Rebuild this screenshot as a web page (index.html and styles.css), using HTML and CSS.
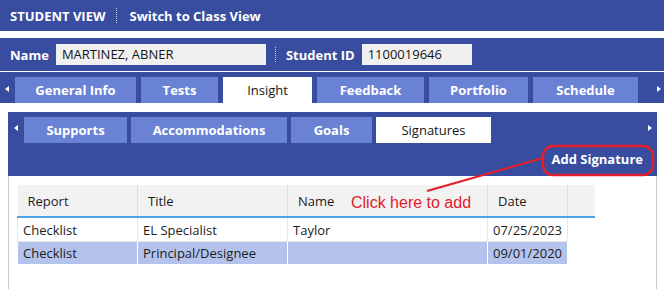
FILE: index.html
```html
<!DOCTYPE html>
<html lang="en">
<head>
    <meta charset="UTF-8">
    <title>Student Signatures</title>
    <link rel="stylesheet" href="styles.css">
</head>
<body>
    <div class="topbar">
        <span>STUDENT VIEW</span>
        <span class="sep"></span>
        <span>Switch to Class View</span>
    </div>

    <div class="infobar">
        <span class="label">Name</span>
        <span class="field field-name">MARTINEZ, ABNER</span>
        <span class="sep"></span>
        <span class="label">Student ID</span>
        <span class="field field-id">1100019646</span>
    </div>

    <div class="tabbar">
        <span class="arrow left"></span>
        <div class="tabs">
            <span class="tab">General Info</span>
            <span class="tab">Tests</span>
            <span class="tab active">Insight</span>
            <span class="tab">Feedback</span>
            <span class="tab">Portfolio</span>
            <span class="tab">Schedule</span>
        </div>
        <span class="arrow right"></span>
    </div>

    <div class="panel">
        <div class="panel-head">
            <div class="subtabbar">
                <span class="arrow left"></span>
                <div class="subtabs">
                    <span class="subtab">Supports</span>
                    <span class="subtab">Accommodations</span>
                    <span class="subtab">Goals</span>
                    <span class="subtab active">Signatures</span>
                </div>
                <span class="arrow right"></span>
            </div>
            <div class="actions">
                <span class="add-btn">Add Signature</span>
            </div>
        </div>

        <table class="grid">
            <colgroup>
                <col style="width:120px">
                <col style="width:150px">
                <col style="width:200px">
                <col style="width:80px">
                <col style="width:27px">
            </colgroup>
            <thead>
                <tr>
                    <th>Report</th>
                    <th>Title</th>
                    <th>Name</th>
                    <th>Date</th>
                    <th></th>
                </tr>
            </thead>
            <tbody>
                <tr>
                    <td>Checklist</td>
                    <td>EL Specialist</td>
                    <td>Taylor</td>
                    <td>07/25/2023</td>
                    <td class="spacer"></td>
                </tr>
                <tr class="selected">
                    <td>Checklist</td>
                    <td>Principal/Designee</td>
                    <td></td>
                    <td>09/01/2020</td>
                    <td class="spacer"></td>
                </tr>
            </tbody>
        </table>
    </div>

    <!-- red annotation drawn over the page -->
    <svg class="note-lines" width="664" height="289" viewBox="0 0 664 289">
        <line x1="427" y1="191" x2="543" y2="158" stroke="#e3202b" stroke-width="2.2"/>
        <rect x="543" y="146" width="110" height="29" rx="10" ry="10" fill="none" stroke="#e3202b" stroke-width="2.4"/>
    </svg>
    <div class="note-text">Click here to add</div>
</body>
</html>
```

FILE: styles.css
```css
body {
    margin: 0;
    font-family: "Open Sans", Arial, sans-serif;
    font-size: 13px;
    color: #1c1c1c;
    background-color: #fff;
    width: 664px;
    height: 289px;
    overflow: hidden;
    position: relative;
}

.topbar {
    height: 31px;
    background-color: #384ca0;
    color: #fff;
    font-weight: 700;
    display: flex;
    align-items: center;
    padding-left: 10px;
}

.sep {
    height: 15px;
    border-left: 1px dotted #c8d0ee;
    margin: 0 13px 0 10px;
}

.infobar {
    margin-top: 7px;
    height: 33px;
    background-color: #384ca0;
    border-bottom: 1px solid #fff;
    display: flex;
    align-items: center;
    padding-left: 10px;
    color: #fff;
    font-weight: 700;
}

.infobar .sep {
    margin: 0 10px 0 9px;
}

.field {
    height: 21px;
    line-height: 21px;
    background-color: #f0f0f0;
    color: #151515;
    font-weight: 500;
    padding-left: 6px;
    box-sizing: border-box;
    margin-left: 7px;
}

.field-name {
    width: 210px;
}

.field-id {
    width: 110px;
}

.tabbar {
    height: 31px;
    background-color: #384ca0;
    display: flex;
    align-items: flex-end;
}

.arrow {
    width: 0;
    height: 0;
    border-top: 3px solid transparent;
    border-bottom: 3px solid transparent;
    align-self: center;
}

.arrow.left {
    border-right: 4px solid #fff;
    margin: 2px 6px 0 5px;
}

.arrow.right {
    border-left: 4px solid #fff;
    margin: 2px 0 0 auto;
}

.tabbar .arrow.right {
    margin-right: 3px;
}

.tabs,
.subtabs {
    display: flex;
    gap: 5px;
}

.tab,
.subtab {
    height: 26px;
    line-height: 26px;
    background-color: #6a82d4;
    color: #fff;
    font-weight: 700;
    text-align: center;
}

.tab.active,
.subtab.active {
    background-color: #fff;
    color: #151515;
    font-weight: 500;
}

.tab:nth-child(1) { width: 121px; }
.tab:nth-child(2) { width: 77px; }
.tab:nth-child(3) { width: 89px; }
.tab:nth-child(4) { width: 107px; }
.tab:nth-child(5) { width: 99px; }
.tab:nth-child(6) { width: 105px; }

.panel {
    margin: 9px 7px 0 8px;
    border-left: 1px solid #c9c9c9;
    border-right: 1px solid #c9c9c9;
    height: 177px;
}

.panel-head {
    background-color: #384ca0;
    height: 64px;
    margin-left: -1px;
    margin-right: -1px;
}

.subtabbar {
    display: flex;
    padding-top: 5px;
    height: 26px;
}

.subtabbar .arrow.left {
    margin-left: 6px;
    margin-right: 6px;
    margin-top: -4px;
}

.subtabbar .arrow.right {
    margin-right: 5px;
    margin-top: -4px;
}

.subtabs {
    gap: 4px;
}

.subtab:nth-child(1) { width: 103px; }
.subtab:nth-child(2) { width: 156px; }
.subtab:nth-child(3) { width: 81px; }
.subtab:nth-child(4) { width: 115px; }

.actions {
    display: flex;
    justify-content: flex-end;
    height: 33px;
    align-items: center;
}

.add-btn {
    color: #fff;
    font-weight: 700;
    margin-right: 14px;
    margin-top: -1px;
}

.grid {
    margin: 9px 0 0 8px;
    border-collapse: collapse;
    table-layout: fixed;
    width: 577px;
}

.grid th {
    height: 31px;
    padding: 0 0 0 10px;
    background-color: #f2f2f2;
    border-left: 1px solid #dcdcdc;
    border-bottom: 2px solid #4da3e6;
    text-align: left;
    font-weight: 500;
}

.grid th:first-child {
    border-left: none;
}

.grid td {
    height: 23px;
    padding: 0 0 0 5px;
    border: 1px solid #e8e8e8;
    border-top: none;
}

.grid tr.selected td {
    height: 22px;
    background-color: #b4c3ec;
    border-color: #fff;
}

.grid td.spacer,
.grid tr.selected td.spacer {
    background-color: transparent;
    border: none;
}

.note-lines {
    position: absolute;
    left: 0;
    top: 0;
    pointer-events: none;
}

.note-text {
    position: absolute;
    left: 351px;
    top: 194px;
    color: #e3202b;
    font-family: "Liberation Sans", Arial, sans-serif;
    font-size: 16px;
}
```
